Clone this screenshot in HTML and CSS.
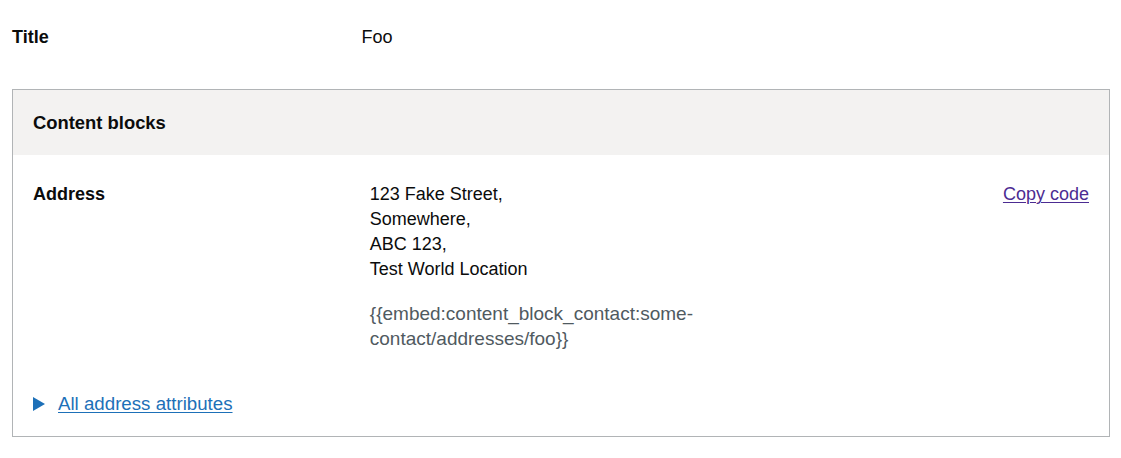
FILE: index.html
```html
<!DOCTYPE html>
<html lang="en">
<head>
<meta charset="utf-8">
<title>Content block</title>
<link rel="stylesheet" href="styles.css">
</head>
<body>
<main class="page">
  <dl class="summary summary--plain">
    <div class="summary__row">
      <dt class="summary__key">Title</dt>
      <dd class="summary__value">Foo</dd>
    </div>
  </dl>

  <section class="card">
    <div class="card__header">
      <h2 class="card__title">Content blocks</h2>
    </div>
    <div class="card__content">
      <dl class="summary">
        <div class="summary__row">
          <dt class="summary__key">Address</dt>
          <dd class="summary__value">
            <p class="address">123 Fake Street,<br>Somewhere,<br>ABC 123,<br>Test World Location</p>
            <p class="embed">{{embed:content_block_contact:some-contact/addresses/foo}}</p>
          </dd>
          <dd class="summary__actions"><a class="link link--visited" href="#">Copy code</a></dd>
        </div>
      </dl>
      <details class="details">
        <summary class="details__summary"><span class="details__arrow"></span><span class="details__text">All address attributes</span></summary>
      </details>
    </div>
  </section>
</main>
</body>
</html>
```

FILE: styles.css
```css
* { box-sizing: border-box; }

body {
  margin: 0;
  font-family: "Liberation Sans", Arial, sans-serif;
  color: #0b0c0c;
  background: #fff;
  font-size: 18px;
  line-height: 25px;
}

.page {
  padding: 25px 11px 0 12px;
}

.summary {
  margin: 0;
}

.summary__row {
  display: flex;
}

.summary__key {
  flex: 0 0 calc(30% + 20px);
  padding-right: 20px;
  font-weight: 700;
  margin: 0;
}

.summary__value {
  flex: 0 0 calc(50% - 20px);
  padding-right: 20px;
  margin: 0;
}

.summary__actions {
  flex: 1 1 auto;
  margin: 0;
  text-align: right;
}

.summary--plain {
  margin-bottom: 39px;
}

.card {
  border: 1px solid #b1b4b6;
}

.card__header {
  background: #f3f2f1;
  padding: 20px;
}

.card__title {
  margin: 0;
  font-size: 18.4px;
  line-height: 25px;
  font-weight: 700;
}

.card__content {
  padding: 27px 20px 20px;
}

.address {
  margin: 0 0 19px;
}

.embed {
  margin: 0;
  color: #505a5f;
  font-size: 19px;
  width: 350px;
}

.link {
  color: #1d70b8;
  text-decoration: underline;
  text-underline-offset: 0.1em;
  text-decoration-thickness: 1px;
}

.link--visited {
  color: #4c2c92;
}

.details {
  margin-top: 40px;
}

.details__summary {
  list-style: none;
  display: flex;
  align-items: center;
  color: #1d70b8;
  cursor: pointer;
}

.details__summary::-webkit-details-marker {
  display: none;
}

.details__arrow {
  width: 0;
  height: 0;
  border-style: solid;
  border-width: 7px 0 7px 12px;
  border-color: transparent transparent transparent #1d70b8;
  margin-right: 13px;
}

.details__text {
  font-size: 18.7px;
  text-decoration: underline;
  text-underline-offset: 0.1em;
  text-decoration-thickness: 1px;
}
```
